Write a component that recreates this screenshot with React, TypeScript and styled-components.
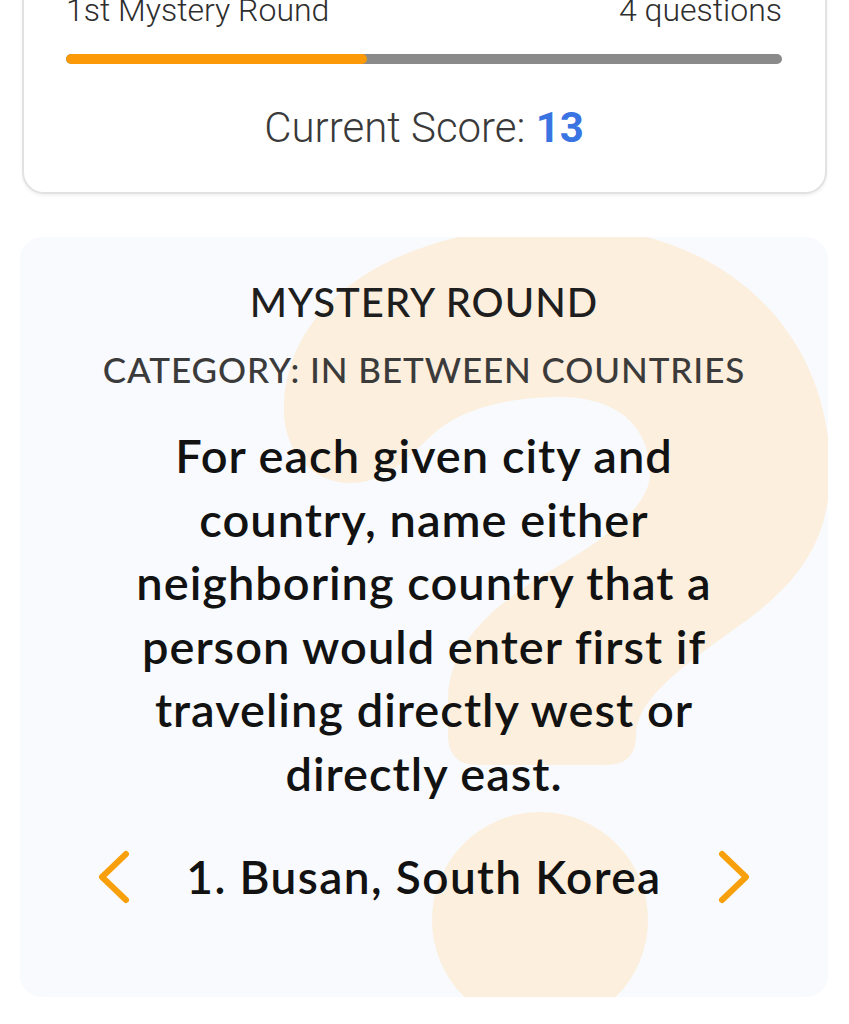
import React from "react";
import styled, { createGlobalStyle } from "styled-components";

const GlobalStyle = createGlobalStyle`
  html, body {
    margin: 0;
    padding: 0;
    background: #ffffff;
  }
  body {
    font-family: Roboto, "Liberation Sans", sans-serif;
    overflow: hidden;
  }
`;

const Page = styled.div`
  width: 849px;
  height: 1024px;
  overflow: hidden;
  display: flex;
  flex-direction: column;
`;

const ProgressCard = styled.section`
  margin: -30px 22px 0 22px;
  padding: 20px 43px 40px 42px;
  border: 2px solid #e2e2e2;
  border-radius: 22px;
  background: #ffffff;
  box-shadow: 0 2px 3px rgba(0, 0, 0, 0.06);
`;

const RoundRow = styled.div`
  display: flex;
  justify-content: space-between;
  align-items: center;
  font-size: 32px;
  font-weight: 300;
  line-height: 36px;
  color: #2e2e2e;
`;

const Track = styled.div`
  margin-top: 26px;
  height: 10px;
  border-radius: 5px;
  background: #8a8a8a;
  overflow: hidden;
`;

const Fill = styled.div`
  height: 100%;
  border-radius: 5px;
  background: #fb9a06;
`;

const Score = styled.div`
  margin-top: 40px;
  text-align: center;
  font-size: 42px;
  font-weight: 300;
  line-height: 48px;
  color: #3a3a3a;

  strong {
    font-weight: 700;
    color: #3a74e2;
  }
`;

const QuestionCard = styled.section`
  position: relative;
  margin: 43px 21px 0 20px;
  height: 760px;
  box-sizing: border-box;
  padding-top: 43px;
  border-radius: 22px;
  background: #f8fafd;
  overflow: hidden;
  display: flex;
  flex-direction: column;
  align-items: center;
  font-family: Lato, "Open Sans", sans-serif;
  text-align: center;
`;

const Backdrop = styled.svg`
  position: absolute;
  inset: 0;
  width: 100%;
  height: 100%;
`;

const Content = styled.div`
  position: relative;
  display: flex;
  flex-direction: column;
  align-items: center;
`;

const Heading = styled.h2`
  margin: 0;
  font-size: 40px;
  font-weight: 500;
  letter-spacing: 1px;
  line-height: 44px;
  color: #1e1e1e;
`;

const Category = styled.h3`
  margin: 25px 0 0;
  font-size: 35px;
  font-weight: 500;
  letter-spacing: 0.9px;
  line-height: 40px;
  color: #3c3b3b;
`;

const Question = styled.p`
  margin: 35px 0 0;
  font-size: 47px;
  font-weight: 600;
  letter-spacing: 1px;
  line-height: 63.6px;
  color: #121212;
`;

const Line = styled.span`
  display: block;
  white-space: nowrap;
`;

const Prompt = styled.div`
  margin-top: 43px;
  display: flex;
  align-items: center;
  gap: 56px;
`;

const PromptText = styled.span`
  font-size: 46px;
  font-weight: 600;
  letter-spacing: 1.4px;
  line-height: 56px;
  color: #121212;
  white-space: nowrap;
`;

const Arrow = styled.button`
  display: flex;
  padding: 0;
  border: none;
  background: none;
  cursor: pointer;
`;

const Chevron = ({ dir }: { dir: "left" | "right" }) => (
  <svg width="32" height="54" viewBox="0 0 32 54">
    <polyline
      points={dir === "left" ? "28,4 4,27 28,50" : "4,4 28,27 4,50"}
      fill="none"
      stroke="#f7a00c"
      strokeWidth="6"
      strokeLinecap="round"
      strokeLinejoin="round"
    />
  </svg>
);

const QuestionMark = () => (
  <Backdrop viewBox="20 237 808 760" preserveAspectRatio="none">
    <path
      fill="#fcefdd"
      d="M 284 410
         C 284 300, 400 226, 560 226
         C 722 226, 830 330, 830 470
         C 830 540, 800 582, 740 625
         C 680 668, 636 700, 636 735
         Q 636 765, 606 765
         L 478 765
         Q 448 765, 448 735
         L 448 700
         C 448 640, 500 600, 560 565
         C 620 530, 652 500, 650 470
         C 648 420, 610 397, 560 397
         C 500 397, 455 412, 430 437
         C 405 460, 385 483, 350 483
         C 315 483, 284 455, 284 410 Z"
    />
    <circle cx="540" cy="920" r="108" fill="#fcefdd" />
  </Backdrop>
);

const questionLines = [
  "For each given city and",
  "country, name either",
  "neighboring country that a",
  "person would enter first if",
  "traveling directly west or",
  "directly east.",
];

export default function App() {
  const answered = 0.42;
  return (
    <Page>
      <GlobalStyle />
      <ProgressCard>
        <RoundRow>
          <span>1st Mystery Round</span>
          <span>4 questions</span>
        </RoundRow>
        <Track>
          <Fill style={{ width: `${answered * 100}%` }} />
        </Track>
        <Score>
          Current Score: <strong>13</strong>
        </Score>
      </ProgressCard>

      <QuestionCard>
        <QuestionMark />
        <Content>
          <Heading>MYSTERY ROUND</Heading>
          <Category>CATEGORY: IN BETWEEN COUNTRIES</Category>
          <Question>
            {questionLines.map((line) => (
              <Line key={line}>{line}</Line>
            ))}
          </Question>
          <Prompt>
            <Arrow aria-label="Previous">
              <Chevron dir="left" />
            </Arrow>
            <PromptText>1. Busan, South Korea</PromptText>
            <Arrow aria-label="Next">
              <Chevron dir="right" />
            </Arrow>
          </Prompt>
        </Content>
      </QuestionCard>
    </Page>
  );
}
